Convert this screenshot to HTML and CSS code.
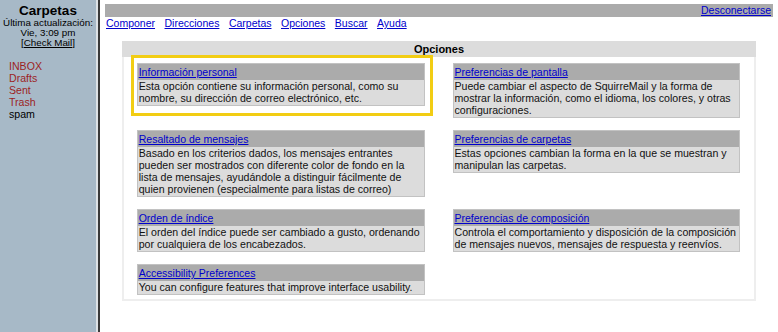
FILE: index.html
```
<!DOCTYPE html>
<html lang="es">
<head>
<meta charset="utf-8">
<title>Opciones</title>
<link rel="stylesheet" href="styles.css">
</head>
<body>
<div class="frames">
  <aside class="left">
    <div class="lt-title">Carpetas</div>
    <div class="lt-upd">Última actualización:<br>Vie, 3:09 pm<br>[<a href="#" class="check">Check Mail</a>]</div>
    <ul class="folders">
      <li class="special">INBOX</li>
      <li class="special">Drafts</li>
      <li class="special">Sent</li>
      <li class="special">Trash</li>
      <li>spam</li>
    </ul>
  </aside>
  <main class="right">
    <div class="topbar"><a href="#">Desconectarse</a></div>
    <nav class="nav">
      <a href="#">Componer</a>
      <a href="#">Direcciones</a>
      <a href="#">Carpetas</a>
      <a href="#">Opciones</a>
      <a href="#">Buscar</a>
      <a href="#">Ayuda</a>
    </nav>
    <section class="opts">
      <div class="opts-head">Opciones</div>
      <div class="opts-body">
        <div class="card hl">
          <div class="card-title"><a href="#">Información personal</a></div>
          <div class="card-desc">Esta opción contiene su información personal, como su<br>nombre, su dirección de correo electrónico, etc.</div>
          <span class="hl-box"></span>
        </div>
        <div class="card">
          <div class="card-title"><a href="#">Preferencias de pantalla</a></div>
          <div class="card-desc">Puede cambiar el aspecto de SquirreMail y la forma de<br>mostrar la información, como el idioma, los colores, y otras<br>configuraciones.</div>
        </div>
        <div class="card">
          <div class="card-title"><a href="#">Resaltado de mensajes</a></div>
          <div class="card-desc">Basado en los criterios dados, los mensajes entrantes<br>pueden ser mostrados con diferente color de fondo en la<br>lista de mensajes, ayudándole a distinguir fácilmente de<br>quien provienen (especialmente para listas de correo)</div>
        </div>
        <div class="card">
          <div class="card-title"><a href="#">Preferencias de carpetas</a></div>
          <div class="card-desc">Estas opciones cambian la forma en la que se muestran y<br>manipulan las carpetas.</div>
        </div>
        <div class="card">
          <div class="card-title"><a href="#">Orden de índice</a></div>
          <div class="card-desc">El orden del índice puede ser cambiado a gusto, ordenando<br>por cualquiera de los encabezados.</div>
        </div>
        <div class="card">
          <div class="card-title"><a href="#">Preferencias de composición</a></div>
          <div class="card-desc">Controla el comportamiento y disposición de la composición<br>de mensajes nuevos, mensajes de respuesta y reenvíos.</div>
        </div>
        <div class="card">
          <div class="card-title"><a href="#">Accessibility Preferences</a></div>
          <div class="card-desc">You can configure features that improve interface usability.</div>
        </div>
      </div>
    </section>
  </main>
</div>
</body>
</html>
```
FILE: styles.css
```
html, body {
  margin: 0;
  padding: 0;
  height: 100%;
  background: #fff;
}
body {
  font-family: "Liberation Sans", Arial, sans-serif;
  font-size: 10.5px;
  color: #111;
}
a { color: #0000cc; }

.frames {
  display: flex;
  height: 332px;
}

.left {
  width: 96px;
  flex: none;
  background: #a7b9c7;
  border-right: 2px solid #dde2e6;
  padding-top: 3px;
  box-sizing: content-box;
}
.lt-title {
  text-align: center;
  font-weight: bold;
  font-size: 13.5px;
  line-height: 15px;
  color: #000;
}
.lt-upd {
  text-align: center;
  font-size: 9.8px;
  line-height: 10px;
  color: #000;
}
.lt-upd .check { color: #000; }
.folders {
  list-style: none;
  margin: 12px 0 0;
  padding: 0 0 0 9px;
  font-size: 10.6px;
  line-height: 12px;
  color: #000;
}
.folders .special { color: #9c1f1f; }

.right {
  flex: 1;
  border-left: 2px solid #3a3a3a;
  padding: 4px 5px 0 5px;
  min-width: 0;
}

.topbar {
  height: 13px;
  background: #ababab;
  display: flex;
  justify-content: flex-end;
  align-items: center;
  padding-right: 2px;
  line-height: 13px;
}

.nav {
  display: flex;
  gap: 9.5px;
  line-height: 12px;
  padding-left: 1px;
}

.opts {
  width: 95%;
  margin: 12px auto 0;
}
.opts-head {
  background: #dcdcdc;
  height: 16px;
  line-height: 16px;
  text-align: center;
  font-weight: bold;
  font-size: 11px;
  color: #000;
}
.opts-body {
  border: 2px solid #eeeeee;
  border-top: none;
  display: grid;
  grid-template-columns: 1fr 1fr;
  column-gap: 28px;
  row-gap: 12px;
  align-items: start;
  padding: 6px 14px 4px 13px;
}

.card {
  position: relative;
  border: 1px solid #c2c2c2;
  background: #dcdcdc;
}
.card-title {
  background: #ababab;
  line-height: 12px;
  padding: 2px 1px;
  white-space: nowrap;
}
.card-desc {
  font-size: 10.6px;
  line-height: 12px;
  padding: 0 1px 1px;
  white-space: nowrap;
}

.hl-box {
  position: absolute;
  top: -9px;
  left: -7px;
  right: -9px;
  bottom: -11px;
  border: 3px solid #f2cd13;
  pointer-events: none;
}
```
